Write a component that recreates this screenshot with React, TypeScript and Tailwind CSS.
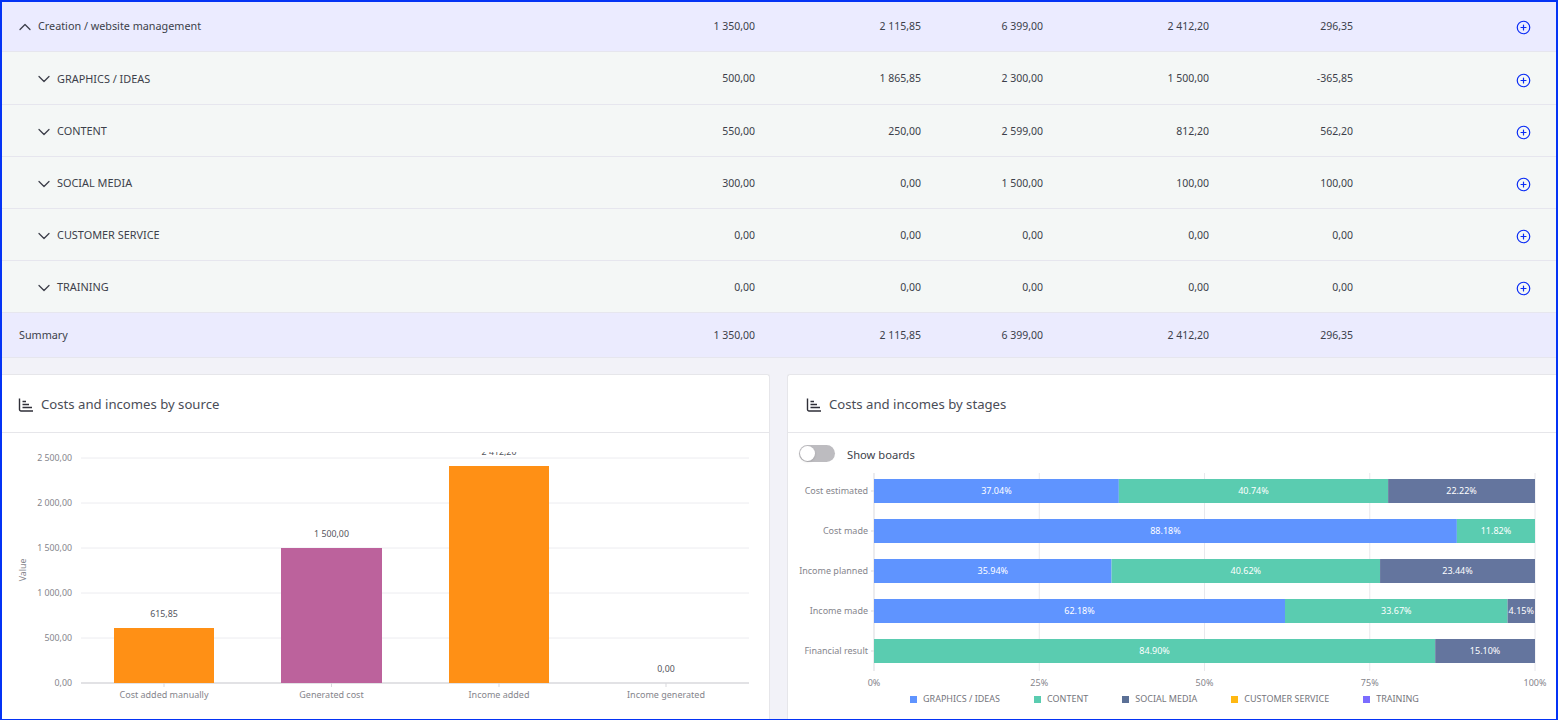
import { ChevronDown, ChevronUp, CirclePlus } from "lucide-react";

const rows = [
  { name: "GRAPHICS / IDEAS", values: ["500,00", "1 865,85", "2 300,00", "1 500,00", "-365,85"] },
  { name: "CONTENT", values: ["550,00", "250,00", "2 599,00", "812,20", "562,20"] },
  { name: "SOCIAL MEDIA", values: ["300,00", "0,00", "1 500,00", "100,00", "100,00"] },
  { name: "CUSTOMER SERVICE", values: ["0,00", "0,00", "0,00", "0,00", "0,00"] },
  { name: "TRAINING", values: ["0,00", "0,00", "0,00", "0,00", "0,00"] },
];

const totals = ["1 350,00", "2 115,85", "6 399,00", "2 412,20", "296,35"];

const sourceBars = [
  { label: "Cost added manually", text: "615,85", x: 112, width: 100, height: 55, color: "#ff9015" },
  { label: "Generated cost", text: "1 500,00", x: 279, width: 101, height: 135, color: "#bc629c" },
  { label: "Income added", text: "2 412,20", x: 447, width: 100, height: 217, color: "#ff9015" },
  { label: "Income generated", text: "0,00", x: 614, width: 100, height: 0, color: "#ff9015" },
];

const sourceTicks = ["2 500,00", "2 000,00", "1 500,00", "1 000,00", "500,00", "0,00"];

const BLUE = "#5f94ff";
const GREEN = "#5accb0";
const SLATE = "#64759e";

const stageBars = [
  { label: "Cost estimated", parts: [{ v: 37.04, c: BLUE }, { v: 40.74, c: GREEN }, { v: 22.22, c: SLATE }] },
  { label: "Cost made", parts: [{ v: 88.18, c: BLUE }, { v: 11.82, c: GREEN }] },
  { label: "Income planned", parts: [{ v: 35.94, c: BLUE }, { v: 40.62, c: GREEN }, { v: 23.44, c: SLATE }] },
  { label: "Income made", parts: [{ v: 62.18, c: BLUE }, { v: 33.67, c: GREEN }, { v: 4.15, c: SLATE }] },
  { label: "Financial result", parts: [{ v: 84.9, c: GREEN }, { v: 15.1, c: SLATE }] },
];

const legend = [
  { name: "GRAPHICS / IDEAS", color: BLUE },
  { name: "CONTENT", color: GREEN },
  { name: "SOCIAL MEDIA", color: "#5b7096" },
  { name: "CUSTOMER SERVICE", color: "#ffb812" },
  { name: "TRAINING", color: "#7b6cff" },
];

const rowGrid = "grid grid-cols-[500px_253px_166px_122px_166px_144px_1fr] items-center";

const ChartIcon = () => (
  <svg width="16" height="16" viewBox="0 0 16 16" fill="none" stroke="#2f2f38" strokeWidth="1.4">
    <path d="M1.5 1.5V12.5a1.5 1.5 0 0 0 1.5 1.5H15" />
    <path d="M4.5 4.5H8M4.5 7.5H11M4.5 10.5H14" />
  </svg>
);

const Values = ({ values, extra = "" }: { values: string[]; extra?: string }) => (
  <>
    {values.map((value, index) => (
      <div key={index} className={`text-right text-[10.5px] ${extra}`}>
        {value}
      </div>
    ))}
  </>
);

const PlusCell = () => (
  <div className="flex justify-end pt-[2px] pr-[25px]">
    <CirclePlus className="h-[15px] w-[15px] text-[#0a2cf5]" strokeWidth={1.9} />
  </div>
);

const CardHeader = ({ title, indent }: { title: string; indent: string }) => (
  <div className={`flex h-[58px] items-center gap-[7px] border-b border-[#e6e6ea] pt-[2px] text-[13.15px] text-[#4a4d57] ${indent}`}>
    <ChartIcon />
    <span>{title}</span>
  </div>
);

const SourceChart = () => (
  <svg width="767" height="268" className="block text-[8.8px]">
    {sourceTicks.map((tick, i) => (
      <g key={tick}>
        <line
          x1="79"
          x2="747"
          y1={6 + i * 45}
          y2={6 + i * 45}
          stroke={i === 5 ? "#d9d9dd" : "#ececf0"}
          strokeWidth={i === 5 ? 1.5 : 1}
        />
        <text x="70" y={9 + i * 45} textAnchor="end" fill="#85858c">
          {tick}
        </text>
      </g>
    ))}
    <text transform="translate(24 118) rotate(-90)" textAnchor="middle" fill="#85858c">
      Value
    </text>
    {sourceBars.map((bar) => (
      <g key={bar.label}>
        <rect x={bar.x} y={231 - bar.height} width={bar.width} height={bar.height} fill={bar.color} />
        <line x1={bar.x + bar.width / 2} x2={bar.x + bar.width / 2} y1="231" y2="235" stroke="#d9d9dd" />
        <text x={bar.x + bar.width / 2} y={231 - bar.height - 11} textAnchor="middle" fill="#55555d">
          {bar.text}
        </text>
        <text x={bar.x + bar.width / 2} y="246" textAnchor="middle" fill="#85858c" className="text-[9px]">
          {bar.label}
        </text>
      </g>
    ))}
  </svg>
);

const StageChart = () => (
  <svg width="768" height="219" className="block text-[9px]">
    {[0, 25, 50, 75, 100].map((tick) => (
      <g key={tick}>
        <line
          x1={86 + tick * 6.61}
          x2={86 + tick * 6.61}
          y1="0"
          y2="198"
          stroke={tick === 0 ? "#d9d9dd" : "#e8e8ec"}
        />
        <text x={86 + tick * 6.61} y="213" textAnchor="middle" fill="#85858c">
          {tick}%
        </text>
      </g>
    ))}
    {stageBars.map((bar, i) => {
      const y = 6 + i * 40;
      let start = 0;
      return (
        <g key={bar.label}>
          <text x="80" y={y + 15} textAnchor="end" fill="#85858c">
            {bar.label}
          </text>
          <line x1="83" x2="86" y1={y + 12} y2={y + 12} stroke="#d9d9dd" />
          {bar.parts.map((part) => {
            const x = 86 + start * 6.61;
            const width = part.v * 6.61;
            start += part.v;
            return (
              <g key={part.v}>
                <rect x={x} y={y} width={width} height={24} fill={part.c} />
                <text x={x + width / 2} y={y + 15} textAnchor="middle" fill="#ffffff">
                  {part.v.toFixed(2)}%
                </text>
              </g>
            );
          })}
        </g>
      );
    })}
  </svg>
);

export default function App() {
  return (
    <div className="h-[720px] w-[1558px] overflow-hidden border-2 border-b border-[#0433f5] bg-[#f2f2f8] font-['Noto_Sans',sans-serif] text-[10.8px] text-[#3c3f4a]">
      {/* Project row */}
      <div className={`${rowGrid} h-[50px] border-b border-[#e6e6ee] bg-[#ebebff]`}>
        <div className="flex items-center gap-[3.5px] pl-[12.5px]">
          <ChevronUp className="h-[20px] w-[20px]" strokeWidth={1.5} />
          <span>Creation / website management</span>
        </div>
        <Values values={totals} />
        <PlusCell />
      </div>

      {/* Stage rows */}
      {rows.map((row, index) => (
        <div
          key={row.name}
          className={`${rowGrid} ${index === 0 ? "h-[53px]" : "h-[52px]"} border-b border-[#e6e6ee] bg-[#f4f7f6] pt-[2px]`}
        >
          <div className="flex items-center gap-[3px] pl-[32px] text-[10.9px]">
            <ChevronDown className="h-[20px] w-[20px]" strokeWidth={1.5} />
            <span>{row.name}</span>
          </div>
          <Values values={row.values} />
          <PlusCell />
        </div>
      ))}

      {/* Summary */}
      <div className={`${rowGrid} h-[45px] border-b border-[#e6e6ee] bg-[#ebebfe]`}>
        <div className="pl-[17px]">Summary</div>
        <Values values={totals} extra="pt-[2px]" />
        <div />
      </div>

      {/* Charts */}
      <div className="mt-[16px] flex gap-[17px]">
        <div className="h-[400px] w-[768px] rounded-tr-[3px] border-t border-r border-[#e6e6ea] bg-white">
          <CardHeader title="Costs and incomes by source" indent="pl-[16px]" />
          <div className="pt-[19px]">
            <SourceChart />
          </div>
        </div>
        <div className="h-[400px] flex-1 rounded-tl-[3px] border-t border-l border-[#e6e6ea] bg-white">
          <CardHeader title="Costs and incomes by stages" indent="pl-[18px]" />
          <div className="flex h-[40px] items-center gap-[12px] pl-[11px]">
            <div className="relative h-[17px] w-[36px] rounded-full bg-[#bdbcc0]">
              <div className="absolute top-[1px] left-[1px] h-[15px] w-[15px] rounded-full bg-white shadow" />
            </div>
            <span className="pt-[5px] text-[11.2px]">Show boards</span>
          </div>
          <StageChart />
          <div className="flex gap-[34px] pl-[122px] text-[9px] leading-[14px] text-[#75757c]">
            {legend.map((item) => (
              <div key={item.name} className="flex items-center gap-[6px]">
                <div className="h-[7px] w-[7px]" style={{ backgroundColor: item.color }} />
                <span>{item.name}</span>
              </div>
            ))}
          </div>
        </div>
      </div>
    </div>
  );
}
